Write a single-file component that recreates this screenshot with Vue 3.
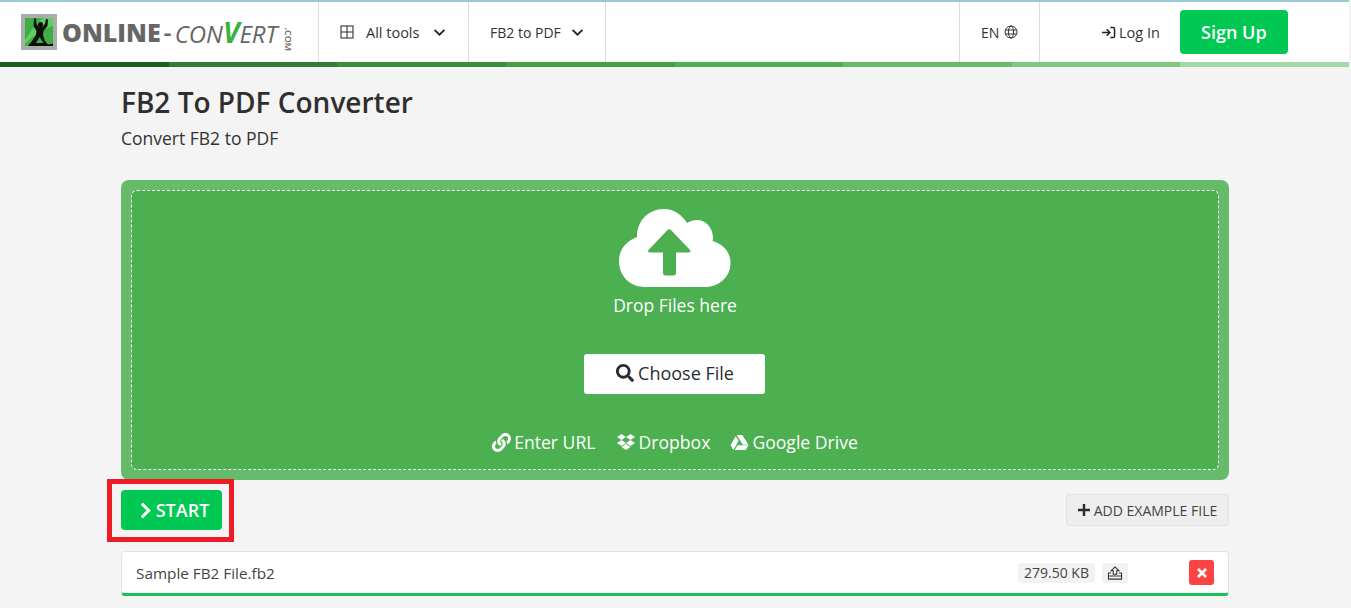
<script setup>
const stripes = ['#1b5e20', '#2e7d32', '#388e3c', '#43a047', '#4caf50', '#66bb6a', '#81c784', '#a5d6a7']
</script>

<template>
  <div class="page">
    <header class="topbar">
      <div class="cell logo-cell">
        <svg class="logo-mark" viewBox="0 0 36 36" width="36" height="36">
          <rect width="36" height="36" fill="#a9aca9" />
          <rect x="4" y="4" width="28" height="28" fill="#3cb043" />
          <path d="M4 26 C10 16 16 9 22 4 L32 4 L32 12 C24 14 14 20 4 30Z" fill="#62cc62" />
          <path d="M13 4.500 L15 4.500 L15.500 10 L18 13 L21 13 L24 10 L25 5 L27 5.500 L26.500 12 L22.500 17 L22 21 L24 27 L27 30.500 L32 29.500 L32 32 L7 32 L11 27 L15 21 L15.500 17 L12.500 12 Z" fill="#0d0f0b" />
          <circle cx="19.500" cy="10.500" r="2.600" fill="#0d0f0b" />
          <path d="M18.500 23 L15 29 L22.500 29 Z" fill="#3cb043" />
        </svg>
        <div class="logo-text"><span class="logo-bold">ONLINE</span><span class="logo-dash">-</span><span class="logo-light">CON<em>V</em>ERT</span><span class="logo-com">.COM</span></div>
      </div>
      <div class="cell tools-cell">
        <svg class="grid-icon" viewBox="0 0 14 14" width="14" height="14" fill="none" stroke="#333" stroke-width="1.100">
          <rect x="1" y="1" width="12" height="12" />
          <path d="M7 1V13M1 7H13" />
        </svg>
        <span>All tools</span>
        <svg class="chev" viewBox="0 0 14 10" width="13" height="9" fill="none" stroke="#222" stroke-width="2"><path d="M1.500 2 7 7.500 12.500 2" /></svg>
      </div>
      <div class="cell format-cell">
        <span>FB2 to PDF</span>
        <svg class="chev" viewBox="0 0 14 10" width="13" height="9" fill="none" stroke="#222" stroke-width="2"><path d="M1.500 2 7 7.500 12.500 2" /></svg>
      </div>
      <div class="spacer"></div>
      <div class="cell lang-cell">
        <span>EN</span>
        <svg viewBox="0 0 14 14" width="14" height="14" fill="none" stroke="#333" stroke-width="1">
          <circle cx="7" cy="7" r="6" /><ellipse cx="7" cy="7" rx="2.600" ry="6" /><path d="M1.200 5H12.800M1.200 9H12.800" />
        </svg>
      </div>
      <div class="account">
        <a class="login">
          <svg viewBox="0 0 16 14" width="15" height="13" fill="none" stroke="#222" stroke-width="1.600"><path d="M1 7H9M6 3.500 9.500 7 6 10.500" /><path d="M10 1.500H13C14 1.500 14.500 2 14.500 3V11C14.500 12 14 12.500 13 12.500H10" /></svg>
          Log In
        </a>
        <a class="signup">Sign Up</a>
      </div>
    </header>
    <div class="stripes">
      <i v-for="c in stripes" :key="c" :style="{ background: c }"></i>
    </div>

    <main class="content">
      <h1>FB2 To PDF Converter</h1>
      <p class="sub">Convert FB2 to PDF</p>

      <section class="drop-outer">
        <div class="drop">
          <svg class="cloud" viewBox="0 0 112 78" width="112" height="78">
            <path d="M26 78 C11 78 0 67 0 52 C0 41 7 32 18 28 C18 12 29 0 45 0 C55 0 63 6 68 14 C71 12 75 11 78 11 C87 11 94 19 94 29 C94 30 94 31 93.500 32 C104 35 111.500 43 111.500 54 C111.500 68 100 78 86 78Z" fill="#fff" />
            <path d="M48.500 21 L29.500 41 C28.500 42.500 29 43.500 31 43.500 L44 43.500 L44 64 C44 65.500 45 66.500 46.500 66.500 L54.500 66.500 C56 66.500 57 65.500 57 64 L57 43.500 L69.500 43.500 C71.500 43.500 72 42.500 71 41 L52 21 C51 20 49.500 20 48.500 21Z" fill="#4caf50" />
          </svg>
          <div class="drop-label">Drop Files here</div>
          <button class="choose">
            <svg viewBox="0 0 512 512" width="18" height="18" fill="#2b2b33"><path d="M505 442.700L405.300 343c-4.500-4.500-10.600-7-17-7H372c27.600-35.300 44-79.700 44-128C416 93.100 322.900 0 208 0S0 93.100 0 208s93.100 208 208 208c48.300 0 92.700-16.400 128-44v16.300c0 6.400 2.500 12.500 7 17l99.700 99.700c9.400 9.400 24.600 9.400 33.900 0l28.300-28.300c9.400-9.400 9.400-24.600.1-34zM208 336c-70.700 0-128-57.200-128-128 0-70.700 57.200-128 128-128 70.700 0 128 57.200 128 128 0 70.700-57.200 128-128 128z" /></svg>
            Choose File
          </button>
          <div class="sources">
            <span>
              <svg viewBox="0 0 512 512" width="19" height="19" fill="#fff"><path d="M326.612 185.391c59.747 59.809 58.927 155.698.36 214.590-.11.12-.24.25-.36.37l-67.200 67.200c-59.270 59.270-155.699 59.262-214.960 0-59.270-59.260-59.270-155.700 0-214.960l37.106-37.106c9.840-9.840 26.786-3.300 27.294 10.606.648 17.722 3.826 35.527 9.690 52.721 1.986 5.822.567 12.262-3.783 16.612l-13.087 13.087c-28.026 28.026-28.905 73.660-1.155 101.960 28.024 28.579 74.086 28.749 102.325.51l67.200-67.190c28.191-28.191 28.073-73.757 0-101.830-3.701-3.694-7.429-6.564-10.341-8.569a16.037 16.037 0 0 1-6.947-12.606c-.396-10.567 3.348-21.456 11.698-29.806l21.054-21.055c5.521-5.521 14.182-6.199 20.584-1.731a152.482 152.482 0 0 1 20.522 17.197zM467.547 44.449c-59.261-59.262-155.690-59.270-214.960 0l-67.200 67.200c-.12.12-.25.25-.36.37-58.566 58.892-59.387 154.781.36 214.590a152.454 152.454 0 0 0 20.521 17.196c6.402 4.468 15.064 3.789 20.584-1.731l21.054-21.055c8.350-8.350 12.094-19.239 11.698-29.806a16.037 16.037 0 0 0-6.947-12.606c-2.912-2.005-6.640-4.875-10.341-8.569-28.073-28.073-28.191-73.639 0-101.830l67.200-67.190c28.239-28.239 74.300-28.069 102.325.51 27.750 28.300 26.872 73.934-1.155 101.960l-13.087 13.087c-4.350 4.350-5.769 10.790-3.783 16.612 5.864 17.194 9.042 34.999 9.690 52.721.509 13.906 17.454 20.446 27.294 10.606l37.106-37.106c59.271-59.259 59.271-155.699.001-214.959z" /></svg>
              Enter URL
            </span>
            <span>
              <svg viewBox="0 0 20 18" width="20" height="18" fill="#fff"><path d="M5.500 1 10 4 5.500 7 1 4ZM14.500 1 19 4 14.500 7 10 4ZM5.500 7 10 10 5.500 13 1 10ZM14.500 7 19 10 14.500 13 10 10ZM5.500 14 10 11 14.500 14 10 17Z" /></svg>
              Dropbox
            </span>
            <span>
              <svg viewBox="0 0 20 18" width="19" height="17" fill="#fff"><path d="M7 1H13L19.500 11.500H13.500ZM6 2.500 9 7.500 3.500 17 .5 12ZM5 17 8 12H19.500L16.500 17Z" /></svg>
              Google Drive
            </span>
          </div>
        </div>
      </section>

      <div class="actions">
        <div class="start-wrap">
          <button class="start">
            <svg viewBox="0 0 10 16" width="11" height="17" fill="none" stroke="#fff" stroke-width="2.800"><path d="M1.500 1.500 8 8 1.500 14.500" /></svg>
            START
          </button>
          <div class="highlight"></div>
        </div>
        <button class="example">
          <svg viewBox="0 0 12 12" width="12" height="12" stroke="#2b2b33" stroke-width="2.400"><path d="M6 0V12M0 6H12" /></svg>
          ADD EXAMPLE FILE
        </button>
      </div>

      <div class="file-row">
        <span class="file-name">Sample FB2 File.fb2</span>
        <span class="file-size">279.50 KB</span>
        <span class="file-up">
          <svg viewBox="0 0 18 16" width="16" height="14" fill="none" stroke="#333" stroke-width="1.200"><path d="M9 1 13.500 5.500H11V9.500H7V5.500H4.500Z" /><path d="M4.500 8H1.500V15H16.500V8H13.500M1.500 11.500H16.500" /></svg>
        </span>
        <span class="file-del">
          <svg viewBox="0 0 10 10" width="10" height="10" stroke="#fff" stroke-width="2.600"><path d="M1 1 9 9M9 1 1 9" /></svg>
        </span>
      </div>
    </main>
  </div>
</template>

<style>
html, body {
  margin: 0;
  height: 100%;
  overflow: hidden;
  background: #f4f4f4;
}
</style>

<style scoped>
.page {
  width: 1351px;
  height: 608px;
  overflow: hidden;
  font-family: "Open Sans", sans-serif;
  color: #333;
  background: #f4f4f4;
}

.topbar {
  display: flex;
  height: 60px;
  width: 1349px;
  background: #fff;
  border-top: 2px solid #9cc9d9;
}

.cell {
  display: flex;
  align-items: center;
  box-sizing: border-box;
  border-right: 1px solid #ddd;
  font-size: 14.500px;
  font-weight: 500;
  color: #333;
}

.logo-cell {
  width: 319px;
  padding-left: 21px;
}

.logo-text {
  display: flex;
  align-items: center;
  margin-left: 5px;
  color: #666;
  line-height: 1;
  white-space: nowrap;
}

.logo-bold {
  font-size: 25px;
  font-weight: 800;
}

.logo-dash {
  font-size: 25px;
  font-weight: 600;
  margin: 0 3px;
}

.logo-light {
  font-size: 24px;
  font-weight: 500;
  font-style: italic;
}

.logo-light em {
  color: #3cb043;
  font-size: 28px;
  font-weight: 700;
}

.logo-com {
  font-size: 9px;
  font-weight: 600;
  transform: rotate(90deg);
  width: 8px;
  margin-left: 6px;
  margin-top: -2px;
}

.tools-cell {
  width: 150px;
  padding-left: 21px;
}

.grid-icon {
  margin-right: 12px;
}

.tools-cell .chev {
  margin-left: 14px;
}

.format-cell {
  width: 137px;
  padding-left: 21px;
  font-size: 14px;
}

.format-cell .chev {
  margin-left: 10px;
}

.spacer {
  flex: 1;
  border-right: 1px solid #ddd;
}

.lang-cell {
  width: 80px;
  padding-left: 21px;
  gap: 5px;
  font-size: 14px;
}

.account {
  width: 309px;
  box-sizing: border-box;
  display: flex;
  align-items: center;
  padding-left: 61px;
}

.login {
  display: flex;
  align-items: center;
  gap: 3px;
  font-size: 14.500px;
  color: #333;
}

.signup {
  margin-left: 20px;
  width: 108px;
  height: 44px;
  display: flex;
  align-items: center;
  justify-content: center;
  background: #00c853;
  border-radius: 4px;
  color: #fff;
  font-size: 18px;
  font-weight: 600;
}

.stripes {
  display: flex;
  width: 1349px;
  height: 5px;
}

.stripes i {
  flex: 1;
}

.content {
  width: 1108px;
  margin: 0 auto;
  position: relative;
  left: -0.500px;
}

h1 {
  margin: 0;
  padding-top: 17px;
  font-size: 28px;
  line-height: 37px;
  font-weight: 600;
  color: #2f2f2f;
}

.sub {
  margin: 5px 0 0;
  font-size: 17.500px;
  line-height: 24px;
  color: #333;
}

.drop-outer {
  margin-top: 30px;
  height: 300px;
  box-sizing: border-box;
  padding: 10px;
  background: #66bb6a;
  border-radius: 8px;
}

.drop {
  height: 100%;
  box-sizing: border-box;
  padding-right: 2px;
  border: 1px dashed #fff;
  border-radius: 6px;
  background: #4caf50;
  display: flex;
  flex-direction: column;
  align-items: center;
  color: #fff;
}

.cloud {
  margin-top: 18px;
  margin-left: 2px;
}

.drop-label {
  margin-top: 6px;
  margin-left: 2px;
  font-size: 17.500px;
  line-height: 24px;
}

.choose {
  margin-top: 37px;
  width: 181px;
  height: 40px;
  padding: 0 0 2px 2px;
  display: flex;
  align-items: center;
  justify-content: center;
  gap: 4px;
  border: none;
  border-radius: 3px;
  background: #fff;
  color: #2b2b33;
  font-family: inherit;
  font-size: 18px;
  font-weight: 500;
}

.sources {
  margin-top: 36px;
  margin-left: 2px;
  display: flex;
  gap: 20px;
  font-size: 17.600px;
  line-height: 24px;
}

.sources span {
  display: flex;
  align-items: center;
  gap: 3px;
}

.actions {
  display: flex;
  justify-content: space-between;
  align-items: center;
  margin-top: 10px;
  height: 40px;
}

.start-wrap {
  position: relative;
}

.start {
  width: 101px;
  height: 40px;
  padding: 0 0 0 6px;
  display: flex;
  align-items: center;
  justify-content: center;
  gap: 5px;
  border: none;
  border-radius: 4px;
  background: #00c853;
  color: #fff;
  font-family: inherit;
  font-size: 18px;
  font-weight: 600;
}

.highlight {
  position: absolute;
  left: -14px;
  top: -11px;
  width: 127px;
  height: 63px;
  box-sizing: border-box;
  border: 5px solid #ed1c24;
}

.example {
  width: 163px;
  height: 32px;
  display: flex;
  align-items: center;
  justify-content: center;
  gap: 4px;
  box-sizing: border-box;
  border: 1px solid #e2e2e2;
  border-radius: 3px;
  background: #eeeeee;
  color: #444;
  font-family: inherit;
  font-size: 14px;
}

.file-row {
  margin-top: 21px;
  height: 45px;
  box-sizing: border-box;
  display: flex;
  align-items: center;
  padding: 0 14px 0 14px;
  background: #fff;
  border: 1px solid #e4e4e4;
  border-bottom: 3px solid #14c25c;
  border-radius: 4px;
  font-size: 14px;
  color: #444;
}

.file-name {
  flex: 1;
  font-size: 15.300px;
}

.file-size {
  padding: 0 6px;
  height: 20px;
  line-height: 20px;
  background: #f2f2f2;
  border-radius: 3px;
}

.file-up {
  margin-left: 7px;
  width: 26px;
  height: 20px;
  display: flex;
  align-items: center;
  justify-content: center;
  background: #f2f2f2;
  border-radius: 3px;
}

.file-del {
  margin-left: 61px;
  width: 25px;
  height: 25px;
  display: flex;
  align-items: center;
  justify-content: center;
  background: #fd4343;
  border-radius: 3px;
}
</style>
